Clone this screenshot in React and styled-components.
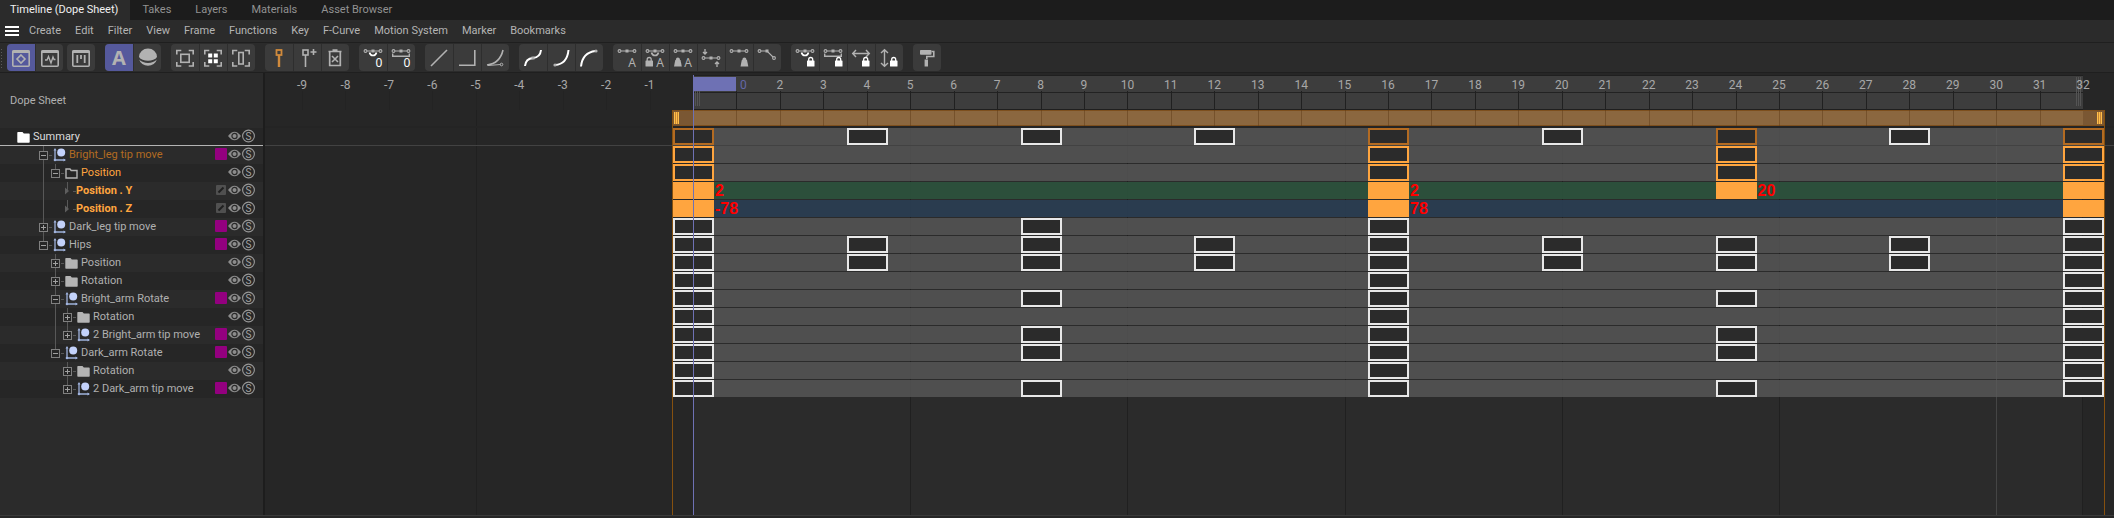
import React from "react";
import styled, { createGlobalStyle, css } from "styled-components";

const GlobalStyle = createGlobalStyle`
  *, *::before, *::after { box-sizing: border-box; }
  body {
    margin: 0;
    background: #2b2b2b;
    color: #b0b0b0;
    font: 11px/18px Roboto, "Noto Sans", sans-serif;
  }
  button { font: inherit; color: inherit; border: 0; padding: 0; background: none; }
`;

const Shell = styled.div`
  display: flex;
  flex-direction: column;
  min-height: 100vh;
  overflow: hidden;
`;

/* ---------- tabs and menu ---------- */

const TabBar = styled.nav`
  display: flex;
  height: 20px;
  background: #1c1c1c;
`;

const Tab = styled.button`
  padding: 0 12px;
  white-space: nowrap;
  color: ${(p) => (p.$active ? "#f0f0f0" : "#929292")};
  background: ${(p) => (p.$active ? "#2b2b2b" : "transparent")};
  ${(p) => p.$active && css`padding: 0 12px 0 10px;`}
`;

const MenuBar = styled.nav`
  display: flex;
  align-items: center;
  height: 22px;
  padding-left: 5px;
`;

const MenuButton = styled.button`
  padding: 0 7px;
  white-space: nowrap;
  color: #b4b4b4;
`;

const Hamburger = styled.button`
  display: flex;
  flex-direction: column;
  gap: 2px;
  width: 14px;
  margin-right: 3px;
  &::before, &::after, span { content: ""; display: block; width: 14px; height: 2px; background: #fff; }
`;

/* ---------- toolbar ---------- */

const ToolBar = styled.div`
  display: flex;
  align-items: center;
  gap: 10px;
  height: 31px;
  border-top: 1px solid #1f1f1f;
  border-bottom: 1px solid #1f1f1f;
`;

const ToolCluster = styled.div`
  display: flex;
  gap: 4px;
`;

const Grip = styled.span`
  width: 4px;
  height: 20px;
  margin-right: -7px;
  background: radial-gradient(circle, #5a5a5a 1px, transparent 1px) 0 0 / 3px 3px;
`;

const ToolGroup = styled.div`
  display: flex;
  border-radius: 4px;
  background: #3b3b3b;
  overflow: hidden;
`;

const ToolButton = styled.button`
  width: 28px;
  height: 27px;
  background: ${(p) => (p.$active ? "#55599c" : "transparent")};
  & + & { border-left: 1px solid #2e2e2e; }
  svg { display: block; width: 28px; height: 28px; fill: none; stroke: #b2b2b2; stroke-width: 1.6; }
  & + & svg { margin-left: -1px; }
  svg text { fill: #b2b2b2; stroke: none; font-family: "Noto Sans", sans-serif; text-anchor: middle; }
`;

const solid = { fill: "#b2b2b2", stroke: "none" };
const bright = { stroke: "#fff" };

const Win = ({ children }) => (
  <>
    <rect x="5.8" y="6.8" width="16.4" height="15.4" rx="1" />
    <path d="M5.5 7.8h17" strokeWidth="2.6" />
    {children}
  </>
);
const Corners = () => <path d="M5.8 10.5V6.5h4.5M17.7 6.5h4.5v4M22.2 18v4h-4.5M10.3 22H5.8v-4" />;
const Keys = ({ y = 7 }) => (
  <g strokeWidth="1.1">
    <path d={`M8 ${y}H20`} />
    <circle cx="6.5" cy={y} r="1.4" />
    <circle cx="21.5" cy={y} r="1.4" />
    <rect x="12.5" y={y - 1.5} width="3" height="3" {...solid} />
  </g>
);
const Lock = ({ x, color = "#fff" }) => (
  <g>
    <rect x={x} y="16.5" width="7.5" height="6" rx="0.6" fill={color} stroke="none" />
    <path d={`M${x + 1.7} 17v-1.5a2 2 0 0 1 4 0V17`} stroke={color} strokeWidth="1.3" />
  </g>
);
const Weight = ({ x }) => (
  <g {...solid}>
    <path d={`M${x + 1.3} 16h5.2l1.3 6.5H${x}z`} />
    <circle cx={x + 3.9} cy="15.5" r="2" />
  </g>
);
const Cup = ({ color }) => <path d="M10.5 8.5c1 4 6 4 7 0" stroke={color} strokeWidth="1.7" />;
const Tray = () => <path d="M5.7 9.5v2.7h16.6V9.5" strokeWidth="1.4" />;
const Small = ({ x, children, color }) => (
  <text x={x} y="22.5" fontSize="12" style={color ? { fill: color } : undefined}>{children}</text>
);

const ICONS = {
  dope: <Win><path d="M14 11l4 4-4 4-4-4z" /></Win>,
  fcurve: <Win><path d="M9 16h2l1.5-3.5L15 19l2-6 1 2.5h1.5" strokeWidth="1.3" /></Win>,
  motion: <Win><path d="M10.3 11v8M14 11v4M17.7 11v8" strokeWidth="1.8" /></Win>,
  auto: <text x="14" y="21" fontSize="20" fontWeight="700">A</text>,
  sphere: (
    <g {...solid}>
      <path d="M5 13a9 8.5 0 0 1 18 0c-3 5-15 5-18 0z" />
      <path d="M5.2 15.5c4 4.5 13.6 4.5 17.6 0a9 8 0 0 1-17.6 0z" />
    </g>
  ),
  frameAll: <><Corners /><rect x="9.8" y="10.3" width="8.4" height="8" /></>,
  frameSel: (
    <>
      <Corners />
      <path d="M9.2 9.6h4v4h-4zM14.8 9.6h4v4h-4zM9.2 15.2h4v4h-4zM14.8 15.2h4v4h-4z" fill="#fff" stroke="none" />
    </>
  ),
  frameTime: <><Corners /><rect x="11.8" y="8.5" width="4.4" height="11.5" /></>,
  key: <g stroke="#d08a3c" strokeWidth="1.8"><rect x="11.5" y="6" width="5" height="5" /><path d="M14 11v12" strokeWidth="2.4" /></g>,
  keyAdd: <><rect x="10" y="6" width="5" height="5" /><path d="M12.5 11v12M17.5 8h6M20.5 5v6" /></>,
  trash: <><path d="M7.5 7.5h13M11.5 6h5M8.7 7.5v14h10.6v-14" strokeWidth="1.7" /><path d="M11 12l6 6M17 12l-6 6" /></>,
  zeroAngle: <><Keys /><Cup color="#fff" /><Small x={20} color="#fff">0</Small></>,
  zeroLength: <><Keys /><Tray /><Small x={20} color="#fff">0</Small></>,
  linear: <path d="M6 22L22 6" />,
  step: <path d="M6 21.2h15.8V6" />,
  spline: <><path d="M6 21C14 20 20 15 22 6" /><path d="M7 21.5l12.5-1" strokeWidth="1" /><circle cx="20.5" cy="20.5" r="1.3" strokeWidth="1" /></>,
  ease: <><path d="M6 22c.5-5 2.5-7.5 8-8s7.5-3 8-8" strokeWidth="2" {...bright} /><rect x="12.5" y="12.5" width="3" height="3" {...solid} /></>,
  easeIn: <><path d="M8 21c8-.5 12.5-5 13.5-15" strokeWidth="2" {...bright} /><circle cx="8" cy="21" r="1.6" {...solid} /></>,
  easeOut: <><path d="M6 22.5C7 13 12 8 20.5 7" strokeWidth="2" {...bright} /><circle cx="21" cy="7" r="1.6" {...solid} /></>,
  autoTangent: <><Keys /><Small x={19}>A</Small></>,
  autoWeight: <><Keys /><Cup /><Lock x={4.5} color="#b2b2b2" /><Small x={19}>A</Small></>,
  slopeWeight: <><Keys /><Weight x={5} /><Small x={19}>A</Small></>,
  clamp: <><Keys y={14} /><path d="M8 5v5M6 8l2 2 2-2M20 23v-5M18 20l2-2 2 2" strokeWidth="1.3" /></>,
  weighted: <><Keys /><Weight x={15.5} /></>,
  breakTangent: (
    <g strokeWidth="1.1">
      <path d="M8 7h6l6 6" /><circle cx="6.5" cy="7" r="1.4" /><circle cx="21" cy="14" r="1.4" />
      <rect x="12.5" y="5.5" width="3" height="3" {...solid} />
    </g>
  ),
  lockAngle: <><Keys /><Cup color="#fff" /><Lock x={16} /></>,
  lockLength: <><Keys /><Tray /><Lock x={16} /></>,
  lockTime: <><path d="M6 9.5h16M9 6L5.7 9.5 9 13M19 6l3.3 3.5L19 13" strokeWidth="1.4" /><Lock x={15} /></>,
  lockValue: <><path d="M9.5 6v16M6 9l3.5-3.3L13 9M6 19l3.5 3.3L13 19" strokeWidth="1.4" /><Lock x={15} /></>,
  roller: (
    <>
      <rect x="7" y="6" width="11.5" height="4.8" rx="0.8" {...solid} />
      <path d="M18.5 7.5h2.3v5h-7V15" strokeWidth="1.6" />
      <path d="M13.3 15.5v7" strokeWidth="3.4" />
    </>
  ),
};

const TOOL_CLUSTERS = [
  [["dope", "fcurve"], ["motion"]],
  [["auto", "sphere"]],
  [["frameAll", "frameSel", "frameTime"]],
  [["key", "keyAdd", "trash"]],
  [["zeroAngle", "zeroLength"]],
  [["linear", "step", "spline"]],
  [["ease", "easeIn", "easeOut"]],
  [["autoTangent", "autoWeight", "slopeWeight", "clamp", "weighted", "breakTangent"]],
  [["lockAngle", "lockLength", "lockTime", "lockValue"]],
  [["roller"]],
];
const ACTIVE_TOOLS = ["dope", "auto"];

/* ---------- object tree ---------- */

const Workspace = styled.main`
  display: grid;
  grid-template-columns: 265px 1fr;
  flex: 1;
`;

const TreePanel = styled.section`
  border-right: 2px solid #1d1d1d;
`;

const TreeHeader = styled.header`
  display: flex;
  align-items: center;
  height: 55px;
  padding-left: 10px;
`;

const TreeRow = styled.div`
  display: flex;
  align-items: center;
  height: 18px;
  padding: 0 8px 0 ${(p) => (p.$root ? 17 : 37)}px;
  background: ${(p) => (p.$odd ? "#2b2b2b" : "#262626")};
  ${(p) => p.$root && css`border-bottom: 1px solid #b4b4b4;`}
`;

const Guide = styled.span`
  display: grid;
  place-items: center;
  flex: none;
  width: 12px;
  height: 18px;
  background: linear-gradient(#585858, #585858) 6px 0 / 1px ${(p) => ({ full: "18px", half: "9px", none: "0" })[p.$line]} no-repeat;
`;

const Toggle = styled.button`
  position: relative;
  width: 9px;
  height: 9px;
  margin-left: 1px;
  border: 1px solid #808080;
  background: #262626;
  &::before { content: ""; position: absolute; left: 1px; top: 3px; width: 5px; height: 1px; background: #a0a0a0; }
  ${(p) => p.$closed && css`
    &::after { content: ""; position: absolute; left: 3px; top: 1px; width: 1px; height: 5px; background: #a0a0a0; }
  `}
`;

const Dash = styled.span`
  flex: none;
  width: 3px;
  height: 1px;
  margin-right: ${(p) => (p.$leaf ? 0 : 1)}px;
  background: #585858;
`;

const Glyph = styled.svg`
  flex: none;
  display: block;
  width: ${(p) => p.$w}px;
  height: 14px;
`;

const NAME_COLORS = { normal: "#b0b0b0", root: "#dcdcdc", active: "#b36b22", selected: "#ffa53f" };

const Name = styled.span`
  flex: 1;
  padding-left: ${(p) => (p.$leaf ? 0 : 3)}px;
  white-space: nowrap;
  font-weight: ${(p) => (p.$leaf ? 700 : 400)};
  color: ${(p) => NAME_COLORS[p.$tone]};
`;

const Flags = styled.span`
  display: flex;
  align-items: center;
  gap: 1px;
  height: 16px;
  align-self: flex-start;
`;

const Swatch = styled.span`
  width: 12px;
  height: 12px;
  border-radius: 1px;
  background: #93007f;
`;

const FlagButton = styled.button`
  display: block;
`;

const FolderIcon = ({ open, white }) => (
  <Glyph $w={13} viewBox="0 0 13 14" aria-hidden="true">
    {open ? (
      <path d="M1 3h4l1.2 1.5H12v7.5H1z" fill="none" stroke="#b4b4b4" strokeWidth="1.4" />
    ) : (
      <path d="M1 2h4.5l1.3 1.5H12q.7 0 .7.7V12q0 .7-.7.7H1q-.7 0-.7-.7V2.7Q.3 2 1 2z" fill={white ? "#fff" : "#b4b4b4"} />
    )}
  </Glyph>
);
const JointIcon = () => (
  <Glyph $w={13} viewBox="0 0 13 14" aria-hidden="true">
    <path d="M2 1.5V12h10" fill="none" stroke="#9fb2dc" strokeWidth="1.3" />
    <path d="M.5 2.5L2 0l1.5 2.5zM10.5 10.5L13 12l-2.5 1.5z" fill="#9fb2dc" />
    <circle cx="2" cy="12" r="1.3" fill="#9fb2dc" />
    <circle cx="8.2" cy="4.5" r="4" fill="#c3d2fb" />
  </Glyph>
);
const EyeIcon = () => (
  <Glyph $w={13} viewBox="0 0 13 14" aria-hidden="true">
    <path d="M0 7Q6.5-1.5 13 7 6.5 15.5 0 7z" fill="#8c8c8c" />
    <circle cx="6.5" cy="7" r="2.6" fill="#8c8c8c" stroke="#2a2a2a" strokeWidth="1.2" />
  </Glyph>
);
const SoloIcon = () => (
  <Glyph $w={13} viewBox="0 0 13 14" aria-hidden="true">
    <circle cx="6.5" cy="7" r="5.9" fill="none" stroke="#989898" strokeWidth="1.1" />
    <text x="6.5" y="10.5" fontSize="10" textAnchor="middle" fill="#a4a4a4">S</text>
  </Glyph>
);

const ALL_KEYS = [0, 4, 8, 12, 16, 20, 24, 28, 32];
const EVERY_8 = [0, 8, 16, 24, 32];
const EVERY_16 = [0, 16, 32];
const SELECTED = [0, 16, 24, 32];

/* guides: one entry for each indent column, the last one holding the toggle */
const ROWS = [
  { name: "Summary", icon: "root", tone: "root", guides: [], keys: ALL_KEYS, kind: "white", active: SELECTED },
  { name: "Bright_leg tip move", icon: "joint", tone: "active", guides: ["full"], keys: SELECTED, kind: "orange" },
  { name: "Position", icon: "open", tone: "selected", guides: ["full", "half"], keys: SELECTED, kind: "orange" },
  { name: "Position . Y", tone: "selected", leaf: true, guides: ["full", "none", "half"], track: "green", keys: SELECTED, kind: "fill", values: { 0: "2", 16: "2", 24: "20" } },
  { name: "Position . Z", tone: "selected", leaf: true, guides: ["full", "none", "half"], track: "blue", keys: EVERY_16, kind: "fill", values: { 0: "-78", 16: "78" } },
  { name: "Dark_leg tip move", icon: "joint", closed: true, guides: ["full"], keys: [0, 8, 16, 32] },
  { name: "Hips", icon: "joint", guides: ["half"], keys: ALL_KEYS },
  { name: "Position", icon: "folder", closed: true, guides: ["none", "full"], keys: ALL_KEYS },
  { name: "Rotation", icon: "folder", closed: true, guides: ["none", "full"], keys: EVERY_16 },
  { name: "Bright_arm Rotate", icon: "joint", guides: ["none", "full"], keys: EVERY_8 },
  { name: "Rotation", icon: "folder", closed: true, guides: ["none", "full", "full"], keys: EVERY_16 },
  { name: "2 Bright_arm tip move", icon: "joint", closed: true, guides: ["none", "full", "half"], keys: EVERY_8 },
  { name: "Dark_arm Rotate", icon: "joint", guides: ["none", "half"], keys: EVERY_8 },
  { name: "Rotation", icon: "folder", closed: true, guides: ["none", "none", "full"], keys: EVERY_16 },
  { name: "2 Dark_arm tip move", icon: "joint", closed: true, guides: ["none", "none", "half"], keys: EVERY_8 },
];

function RowIcon({ icon }) {
  if (icon === "joint") return <JointIcon />;
  if (!icon) return null;
  return <FolderIcon open={icon === "open"} white={icon === "root"} />;
}

function TreeItem({ row, index }) {
  const last = row.guides.length - 1;
  return (
    <TreeRow $odd={index % 2 === 1} $root={index === 0}>
      {row.guides.map((line, i) => (
        <Guide key={i} $line={line}>
          {i === last && !row.leaf && (
            <Toggle $closed={row.closed} aria-label={(row.closed ? "Expand " : "Collapse ") + row.name} />
          )}
          {i === last && row.leaf && (
            <Glyph $w={4} viewBox="0 0 4 14" aria-hidden="true"><path d="M0 3.500L4 7 0 10.500z" fill="#5e5e5e" /></Glyph>
          )}
        </Guide>
      ))}
      {last >= 0 && <Dash $leaf={row.leaf} />}
      <RowIcon icon={row.icon} />
      <Name $tone={row.tone || "normal"} $leaf={row.leaf}>{row.name}</Name>
      <Flags>
        {row.icon === "joint" && <Swatch />}
        {row.leaf && (
          <Glyph $w={12} viewBox="0 0 12 14" aria-hidden="true">
            <rect x="1" y="2" width="10" height="10" rx="1" fill="#505050" />
            <path d="M3.5 9.5l5-5" stroke="#1f1f1f" strokeWidth="2" />
          </Glyph>
        )}
        <FlagButton aria-label={"Visible " + row.name}><EyeIcon /></FlagButton>
        <FlagButton aria-label={"Solo " + row.name}><SoloIcon /></FlagButton>
      </Flags>
    </TreeRow>
  );
}

/* ---------- timeline ---------- */

const FIRST = -9.853;
const SPAN = 42.565;
const at = (frame) => ((frame - FIRST) / SPAN) * 100 + "%";
const span = (a, b) => ({ left: at(a), width: ((b - a) / SPAN) * 100 + "%" });

const Stage = styled.section`
  position: relative;
  display: flex;
  flex-direction: column;
  background: #262626;
  overflow: hidden;
`;

const Ruler = styled.div`
  position: relative;
  height: 37px;
`;

const RulerRange = styled.div`
  position: absolute;
  top: 2px;
  bottom: 0;
  border: solid #1f1f1f;
  border-width: 1px 0;
  background: linear-gradient(#222, #222) 0 16px / 100% 1px no-repeat #3d3d3d;
`;

const Tick = styled.span`
  position: absolute;
  top: ${(p) => (p.$bar ? 0 : 18)}px;
  bottom: 0;
  width: 1px;
  background: ${(p) => (p.$bar ? "rgba(90, 55, 20, 0.45)" : p.$faint ? "#232323" : "#202020")};
`;

const FrameNumber = styled.span`
  position: absolute;
  top: 3px;
  transform: translateX(-50%);
  font-size: 12px;
  color: ${(p) => (p.$current ? "#6468a8" : "#a8a8a8")};
  ${(p) => p.$current && css`margin-left: 7px;`}
`;

const CurrentFrame = styled.span`
  position: absolute;
  top: 4px;
  height: 14px;
  background: #6e71b4;
`;

const RangeGrip = styled.span`
  position: absolute;
  top: ${(p) => (p.$end ? 4 : 18)}px;
  bottom: 4px;
  width: 5px;
  margin-left: ${(p) => (p.$end ? -7 : 2)}px;
  background: repeating-linear-gradient(90deg, #545454 0 1px, transparent 1px 2px);
`;

const Zone = styled.div`
  position: absolute;
  top: 37px;
  bottom: 0;
  background: #2b2b2b;
  border-right: 1px solid #202020;
`;

const GridLine = styled.span`
  position: absolute;
  top: ${(p) => (p.$light ? 55 : 37)}px;
  bottom: 0;
  width: 1px;
  background: ${(p) => (p.$light ? "#454545" : "#202020")};
`;

const RangeBar = styled.div`
  position: relative;
  height: 18px;
  border-bottom: 2px solid #242424;
`;

const RangeFill = styled.div`
  position: absolute;
  top: 0;
  display: flex;
  justify-content: space-between;
  box-sizing: content-box;
  height: 12px;
  margin: 0 -21px;
  padding: 1px 21px;
  border: solid #7d4f1d;
  border-width: 1px 0;
  background: linear-gradient(#8b673f, #8b673f) 21px 0 / calc(100% - 42px) 100% no-repeat #7a5733;
`;

const RangeHandle = styled.button`
  width: 5px;
  height: 12px;
  margin: 0 -19px;
  background: repeating-linear-gradient(90deg, #ffc04a 0 1px, #c68433 1px 2px);
`;

const TrackLine = styled.div`
  position: relative;
  height: 18px;
  border-bottom: 1px solid ${(p) => (p.$first ? "#424242" : "transparent")};
`;

const TRACK_COLORS = {
  gray: "rgba(89, 89, 89, 0.8)",
  green: "rgba(44, 83, 61, 0.9)",
  blue: "rgba(42, 62, 83, 0.9)",
};

const Track = styled.div`
  position: absolute;
  top: 0;
  height: 17px;
  margin: 0 -20px;
  padding: 0 20px;
  box-sizing: content-box;
  background: ${(p) => TRACK_COLORS[p.$color]};
`;

const KEY_BORDER = { white: "#e8e8e8", orange: "#ffa53f", active: "#b36b22", fill: "#ffa53f" };

const Key = styled.button`
  position: absolute;
  top: 0;
  width: 41px;
  height: 17px;
  margin-left: -20px;
  border: 2px solid ${(p) => KEY_BORDER[p.$kind]};
  background: ${(p) => (p.$kind === "fill" ? "#ffa53f" : "#2b2b2b")};
`;

const KeyValue = styled.span`
  position: absolute;
  top: 0;
  margin-left: 22px;
  font: 700 16px/18px "Liberation Sans", Arial, sans-serif;
  color: #f00;
`;

const Bound = styled.span`
  position: absolute;
  top: 37px;
  bottom: 0;
  width: 1px;
  margin-left: ${(p) => (p.$end ? 21 : -21)}px;
  background: #85500f;
`;

const Playhead = styled.span`
  position: absolute;
  top: 2px;
  bottom: 0;
  width: 1px;
  background: #6e71b4;
`;

const StatusEdge = styled.footer`
  height: 3px;
  border-top: 1px solid #3a3a3a;
  background: #262626;
`;

const range = (a, b) => Array.from({ length: b - a + 1 }, (_, i) => a + i);

function Timeline() {
  return (
    <Stage aria-label="Dope sheet keys">
      <Zone style={span(0, 32)} />
      {[-5, 5, 10, 15, 20, 25, 30].map((f) => (
        <GridLine key={f} $light={f === 30} style={{ left: at(f) }} />
      ))}
      <Ruler>
        <RulerRange style={span(0, 32)} />
        {range(-9, -1).map((f) => <Tick key={f} $faint style={{ left: at(f) }} />)}
        {range(1, 31).map((f) => <Tick key={f} style={{ left: at(f) }} />)}
        <RangeGrip style={{ left: at(0) }} />
        <RangeGrip $end style={{ left: at(32) }} />
        <CurrentFrame style={span(0, 1)} />
        {range(-9, 32).filter((f) => f !== 0 && f !== 1).map((f) => (
          <FrameNumber key={f} style={{ left: at(f) }}>{f}</FrameNumber>
        ))}
        <FrameNumber $current style={{ left: at(1) }}>0</FrameNumber>
      </Ruler>
      <RangeBar>
        <RangeFill style={span(0, 32)}>
          <RangeHandle aria-label="Range start" />
          <RangeHandle aria-label="Range end" />
        </RangeFill>
        {range(1, 31).map((f) => <Tick key={f} $bar style={{ left: at(f) }} />)}
      </RangeBar>
      {ROWS.map((row, i) => (
        <TrackLine key={i} $first={i === 0}>
          <Track $color={row.track || "gray"} style={span(0, 32)} />
          {row.keys.map((f) => (
            <Key
              key={f}
              aria-label={row.name + " key at frame " + f}
              $kind={row.active && row.active.includes(f) ? "active" : row.kind || "white"}
              style={{ left: at(f) }}
            />
          ))}
          {Object.entries(row.values || {}).map(([f, value]) => (
            <KeyValue key={f} style={{ left: at(Number(f)) }}>{value}</KeyValue>
          ))}
        </TrackLine>
      ))}
      <Bound style={{ left: at(0) }} />
      <Bound $end style={{ left: at(32) }} />
      <Playhead style={{ left: at(0) }} />
    </Stage>
  );
}

const TABS = ["Timeline (Dope Sheet)", "Takes", "Layers", "Materials", "Asset Browser"];
const MENUS = ["Create", "Edit", "Filter", "View", "Frame", "Functions", "Key", "F-Curve", "Motion System", "Marker", "Bookmarks"];

export default function App() {
  return (
    <Shell>
      <GlobalStyle />
      <TabBar>
        {TABS.map((t, i) => <Tab key={t} $active={i === 0}>{t}</Tab>)}
      </TabBar>
      <MenuBar>
        <Hamburger aria-label="Menu"><span /></Hamburger>
        {MENUS.map((m) => <MenuButton key={m}>{m}</MenuButton>)}
      </MenuBar>
      <ToolBar role="toolbar">
        <Grip />
        {TOOL_CLUSTERS.map((cluster, i) => (
          <ToolCluster key={i}>
            {cluster.map((group) => (
              <ToolGroup key={group[0]}>
                {group.map((id) => (
                  <ToolButton key={id} $active={ACTIVE_TOOLS.includes(id)} aria-label={id}>
                    <svg viewBox="0 0 28 28">{ICONS[id]}</svg>
                  </ToolButton>
                ))}
              </ToolGroup>
            ))}
          </ToolCluster>
        ))}
      </ToolBar>
      <Workspace>
        <TreePanel>
          <TreeHeader>Dope Sheet</TreeHeader>
          {ROWS.map((row, i) => <TreeItem key={i} row={row} index={i} />)}
        </TreePanel>
        <Timeline />
      </Workspace>
      <StatusEdge />
    </Shell>
  );
}
